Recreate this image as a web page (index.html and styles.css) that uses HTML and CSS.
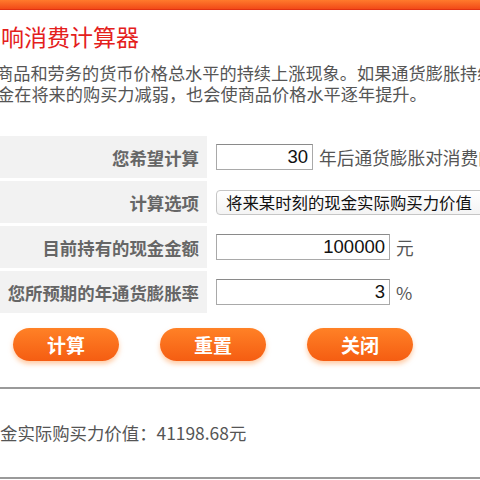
FILE: index.html
```html
<!DOCTYPE html>
<html lang="zh-CN">
<head>
<meta charset="utf-8">
<title>通货膨胀影响消费计算器</title>
<link rel="stylesheet" href="styles.css">
</head>
<body>
<div class="topbar"></div>
<h1 class="title">响消费计算器</h1>
<div class="desc">
  <p class="line l1">商品和劳务的货币价格总水平的持续上涨现象。如果通货膨胀持续</p>
  <p class="line l2">金在将来的购买力减弱，也会使商品价格水平逐年提升。</p>
</div>
<div class="form">
  <div class="label">您希望计算</div>
  <div class="field"><input class="num short" type="text" value="30"><span class="after">年后通货膨胀对消费的影响</span></div>
  <div class="label">计算选项</div>
  <div class="field"><div class="select">将来某时刻的现金实际购买力价值</div></div>
  <div class="label">目前持有的现金金额</div>
  <div class="field"><input class="num long" type="text" value="100000"><span class="after">元</span></div>
  <div class="label">您所预期的年通货膨胀率</div>
  <div class="field"><input class="num long" type="text" value="3"><span class="after">%</span></div>
</div>
<div class="buttons">
  <button class="btn">计算</button>
  <button class="btn">重置</button>
  <button class="btn">关闭</button>
</div>
<div class="result">金实际购买力价值：41198.68元</div>
</body>
</html>
```
FILE: styles.css
```css
html, body {
  margin: 0;
  padding: 0;
  background: #fff;
  overflow: hidden;
  width: 480px;
  height: 480px;
}
body {
  font-family: "Noto Sans CJK SC", "Noto Sans", sans-serif;
  color: #555;
}
.topbar {
  height: 10px;
  background: linear-gradient(#ff7a2c, #f24a18);
  border-bottom: 1px solid #e23212;
  box-sizing: border-box;
}
.title {
  margin: 0;
  padding: 13px 0 0 1px;
  height: 40px;
  box-sizing: border-box;
  font-size: 23px;
  line-height: 27px;
  font-weight: normal;
  color: #e4201c;
  white-space: nowrap;
}
.desc {
  padding-top: 12px;
  width: 480px;
  overflow: hidden;
}
.line {
  margin: 0;
  font-size: 17.2px;
  line-height: 21px;
  white-space: nowrap;
  color: #555;
}
.l1 { margin-left: -4px; }
.l2 { margin-left: -3px; }
.form {
  margin-top: 32px;
  display: grid;
  grid-template-columns: 207px 1fr;
  grid-auto-rows: 42px;
  row-gap: 3px;
  column-gap: 9px;
}
.label {
  background: #f2f2f2;
  display: flex;
  align-items: center;
  justify-content: flex-end;
  padding-right: 8px;
  font-size: 17.4px;
  font-weight: bold;
  color: #666;
  white-space: nowrap;
}
.field {
  display: flex;
  align-items: center;
  white-space: nowrap;
  min-width: 0;
  overflow: hidden;
}
.num {
  box-sizing: border-box;
  height: 26px;
  border: 1px solid #a9a9a9;
  border-top-color: #8a8a8a;
  background: #fff;
  font-family: "Liberation Sans", Arial, sans-serif;
  font-size: 18.5px;
  color: #111;
  text-align: right;
  padding: 0 4px 0 2px;
  margin: 0;
  outline: none;
}
.short { width: 97px; }
.long { width: 174px; }
.after {
  margin-left: 6px;
  font-size: 17.7px;
  color: #555;
}
.select {
  box-sizing: border-box;
  height: 25px;
  width: 290px;
  flex: none;
  border: 1px solid #c6c6c6;
  border-radius: 4px;
  background: linear-gradient(#fff, #f4f4f4);
  padding-left: 9px;
  font-size: 16.4px;
  line-height: 23px;
  color: #111;
}
.buttons {
  display: flex;
  gap: 41px;
  padding: 15px 0 0 13px;
  height: 76px;
  box-sizing: border-box;
  border-bottom: 2px solid #9a9a9a;
}
.btn {
  width: 106px;
  height: 33px;
  border: none;
  border-radius: 17px;
  background: linear-gradient(#ff8126, #f55d12);
  box-shadow: 0 3px 5px rgba(255, 160, 90, 0.55);
  color: #fff;
  font-family: "Noto Sans CJK SC", sans-serif;
  font-weight: bold;
  font-size: 19px;
  line-height: 33px;
  padding: 0;
}
.result {
  height: 90px;
  box-sizing: border-box;
  border-bottom: 2px solid #9a9a9a;
  padding-top: 32px;
  font-size: 17.4px;
  line-height: 24px;
  color: #555;
  white-space: nowrap;
}
```
